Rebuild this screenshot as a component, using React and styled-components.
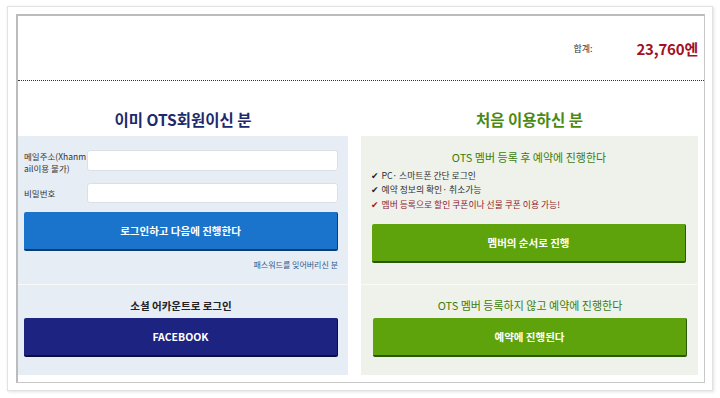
import React from "react";
import styled, { createGlobalStyle } from "styled-components";

const Global = createGlobalStyle`
  body {
    margin: 0;
    background: #ffffff;
    font-family: "Noto Sans CJK KR", "Noto Sans", sans-serif;
  }
`;

const Frame = styled.div`
  margin: 6px 7px;
  width: 706px;
  height: 385px;
  box-sizing: border-box;
  border: 1px solid #e2e2e2;
  box-shadow: 1px 1px 3px rgba(0, 0, 0, 0.12);
  padding: 7px 8px 7px 8px;
  background: #fff;
`;

const Card = styled.div`
  width: 689px;
  height: 369px;
  box-sizing: border-box;
  border: 1px solid #c9c9c9;
  border-top: 2px solid #bcbcbc;
  border-left: 2px solid #bcbcbc;
  display: flex;
  flex-direction: column;
`;

const Summary = styled.div`
  height: 64px;
  border-bottom: 1px dotted #333;
  display: flex;
  align-items: center;
  justify-content: flex-end;
  gap: 44px;
  padding-right: 6px;
  .label {
    font-size: 9px;
    color: #333;
  }
  .amount {
    font-size: 15px;
    font-weight: 700;
    color: #a3101f;
    letter-spacing: -0.2px;
  }
`;

const Columns = styled.div`
  display: grid;
  grid-template-columns: 330px 337px;
  column-gap: 13px;
  padding-right: 6px;
`;

const Column = styled.div`
  display: flex;
  flex-direction: column;
`;

const ColTitle = styled.h2`
  margin: 0;
  height: 55px;
  box-sizing: border-box;
  padding-top: 28px;
  font-size: 15.5px;
  line-height: 20px;
  font-weight: 700;
  text-align: center;
  color: ${(p) => p.$color};
`;

const Panel = styled.div`
  height: 239px;
  background: ${(p) => p.$bg};
  display: flex;
  flex-direction: column;
`;

const Section = styled.div`
  box-sizing: border-box;
  height: ${(p) => p.$h}px;
  padding: ${(p) => p.$pad};
  display: flex;
  flex-direction: column;
  & + & {
    border-top: 1px solid ${(p) => p.$line};
  }
`;

const FieldRow = styled.div`
  display: flex;
  align-items: flex-start;
  margin-bottom: ${(p) => p.$mb || 0}px;
`;

const Label = styled.label`
  width: 63px;
  font-size: 8.5px;
  line-height: 12px;
  color: #333;
  word-break: break-all;
  padding-top: ${(p) => p.$pt || 0}px;
`;

const Input = styled.input`
  flex: 1;
  height: ${(p) => p.$h || 20}px;
  box-sizing: border-box;
  border: 1px solid #dbe0e7;
  border-radius: 3px;
  background: #fff;
  outline: none;
`;

const Button = styled.button`
  width: 314px;
  height: 39px;
  border: none;
  border-right: 1px solid ${(p) => p.$edge};
  border-bottom: 2px solid ${(p) => p.$edge};
  border-radius: 2px;
  background: ${(p) => p.$bg};
  color: #fff;
  font-family: "Noto Sans CJK KR", "Noto Sans", sans-serif;
  font-size: 10.5px;
  font-weight: 700;
  cursor: pointer;
`;

const ForgotLink = styled.a`
  align-self: flex-end;
  margin-top: 8px;
  font-size: 8px;
  line-height: 12px;
  color: #2c5a8c;
  text-decoration: none;
`;

const SubTitle = styled.div`
  font-size: ${(p) => p.$size || 11}px;
  line-height: 15px;
  font-weight: ${(p) => (p.$bold ? 700 : 400)};
  color: ${(p) => p.$color};
  text-align: center;
  margin-bottom: ${(p) => p.$mb || 0}px;
`;

const CheckList = styled.ul`
  list-style: none;
  margin: 4px 0 11px;
  padding: 0;
`;

const CheckItem = styled.li`
  height: 14.5px;
  display: flex;
  align-items: center;
  font-size: 8.8px;
  line-height: 1;
  color: ${(p) => (p.$hot ? "#8e1a2c" : "#333")};
  white-space: nowrap;
  &::before {
    content: "✔";
    font-family: "DejaVu Sans", sans-serif;
    font-size: 9px;
    line-height: 1;
    margin-right: 3px;
    color: ${(p) => (p.$hot ? "#a3101f" : "#222")};
  }
`;

export default function App() {
  return (
    <>
      <Global />
      <Frame>
        <Card>
          <Summary>
            <span className="label">합계:</span>
            <span className="amount">23,760엔</span>
          </Summary>
          <Columns>
            <Column>
              <ColTitle $color="#1c2a6b">이미 OTS회원이신 분</ColTitle>
              <Panel $bg="#e7edf5">
                <Section $h={148} $pad="14px 10px 0 6px">
                  <FieldRow $mb={9}>
                    <Label>메일주소(Xhanmail이용 불가)</Label>
                    <Input $h={21} />
                  </FieldRow>
                  <FieldRow $mb={9}>
                    <Label $pt={4}>비밀번호</Label>
                    <Input $h={20} />
                  </FieldRow>
                  <Button $bg="#1b74cb" $edge="#0d3d6e">로그인하고 다음에 진행한다</Button>
                  <ForgotLink href="#">패스워드를 잊어버리신 분</ForgotLink>
                </Section>
                <Section $h={91} $pad="13px 10px 0 6px" $line="#f6f8fb">
                  <SubTitle $size={10.5} $bold $color="#222" $mb={5}>소셜 어카운트로 로그인</SubTitle>
                  <Button $bg="#1d2381" $edge="#0b0e3e">FACEBOOK</Button>
                </Section>
              </Panel>
            </Column>
            <Column>
              <ColTitle $color="#4b8a12">처음 이용하신 분</ColTitle>
              <Panel $bg="#eef2ea">
                <Section $h={148} $pad="14px 11px 0 10px">
                  <SubTitle $color="#3d7d0c">OTS 멤버 등록 후 예약에 진행한다</SubTitle>
                  <CheckList>
                    <CheckItem>PC· 스마트폰 간단 로그인</CheckItem>
                    <CheckItem>예약 정보의 확인· 취소가능</CheckItem>
                    <CheckItem $hot>멤버 등록으로 할인 쿠폰이나 선물 쿠폰 이용 가능!</CheckItem>
                  </CheckList>
                  <Button $bg="#5ea30c" $edge="#2c5706" style={{ alignSelf: "center" }}>
                    멤버의 순서로 진행
                  </Button>
                </Section>
                <Section $h={91} $pad="13px 11px 0 12px" $line="#f8faf6">
                  <SubTitle $color="#3d7d0c" $mb={5}>OTS 멤버 등록하지 않고 예약에 진행한다</SubTitle>
                  <Button $bg="#5ea30c" $edge="#2c5706">예약에 진행된다</Button>
                </Section>
              </Panel>
            </Column>
          </Columns>
        </Card>
      </Frame>
    </>
  );
}
